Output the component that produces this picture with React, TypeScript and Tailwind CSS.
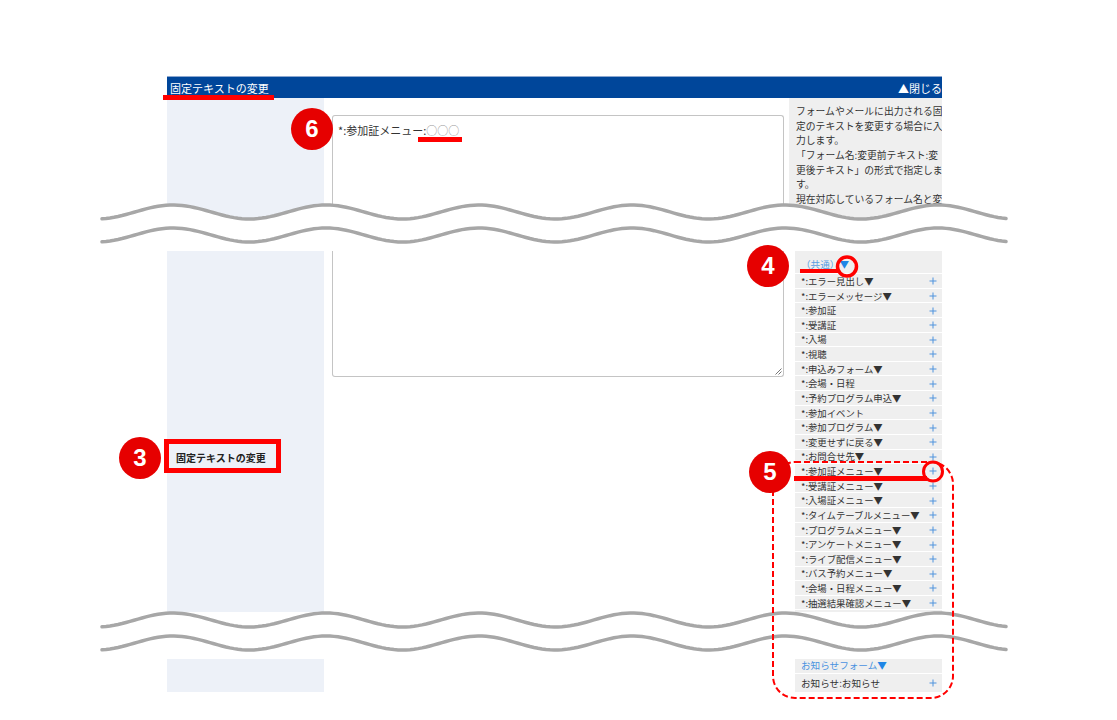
import React from 'react';

const commonItems = [
  '*:エラー見出し▼',
  '*:エラーメッセージ▼',
  '*:参加証',
  '*:受講証',
  '*:入場',
  '*:視聴',
  '*:申込みフォーム▼',
  '*:会場・日程',
  '*:予約プログラム申込▼',
  '*:参加イベント',
  '*:参加プログラム▼',
  '*:変更せずに戻る▼',
  '*:お問合せ先▼',
  '*:参加証メニュー▼',
  '*:受講証メニュー▼',
  '*:入場証メニュー▼',
  '*:タイムテーブルメニュー▼',
  '*:プログラムメニュー▼',
  '*:アンケートメニュー▼',
  '*:ライブ配信メニュー▼',
  '*:バス予約メニュー▼',
  '*:会場・日程メニュー▼',
  '*:抽選結果確認メニュー▼',
];

const helpLines = [
  'フォームやメールに出力される固',
  '定のテキストを変更する場合に入',
  '力します。',
  '「フォーム名:変更前テキスト:変',
  '更後テキスト」の形式で指定しま',
  'す。',
  '現在対応しているフォーム名と変',
];

function PlusIcon() {
  return (
    <svg width="8" height="8" viewBox="0 0 8 8" className="shrink-0">
      <path d="M4 0.5V7.5M0.5 4H7.5" stroke="#4f93dd" strokeWidth="1" />
    </svg>
  );
}

function Row({ label }: { label: string }) {
  return (
    <div className="flex h-[14.64px] items-center justify-between border-b border-white pl-[6px] pr-[5px] pt-[1px]">
      <span className="whitespace-nowrap text-[9.4px] text-[#333]">{label}</span>
      <PlusIcon />
    </div>
  );
}

function Wave({ className }: { className: string }) {
  const W = 910;
  const line = (c: number) => {
    let d = '';
    for (let x = 2; x <= W - 2; x += 4) {
      const y = c - 7 * Math.cos((2 * Math.PI * (x - 73)) / 153);
      d += (x === 2 ? 'M' : 'L') + x + ' ' + y.toFixed(2) + ' ';
    }
    return d;
  };
  const l1 = line(14);
  const l2 = line(37);
  return (
    <svg width={W} height={53} viewBox={`0 0 ${W} 53`} className={className}>
      <path d={`${l1} L${W} 14 L${W} 53 L0 53 L0 14 Z`} fill="#fff" />
      <path d={l1} fill="none" stroke="#a7a7a7" strokeWidth="3.5" strokeLinecap="round" />
      <path d={l2} fill="none" stroke="#a7a7a7" strokeWidth="3.5" strokeLinecap="round" />
    </svg>
  );
}

function Badge({ n, className }: { n: string; className: string }) {
  return (
    <div
      className={`absolute z-30 flex h-[42px] w-[42px] items-center justify-center rounded-full bg-[#e60000] font-['Liberation_Sans',Arial,sans-serif] text-[24px] font-bold text-white ${className}`}
    >
      {n}
    </div>
  );
}

export default function App() {
  return (
    <div className="relative h-[720px] w-[1117px] overflow-hidden bg-white font-['Noto_Sans_CJK_JP','Noto_Sans',sans-serif] text-[9.8px] leading-[14.67px]">
      <div className="flex flex-col pt-[76px]">
        {/* header bar */}
        <div className="ml-[167px] flex h-[22px] w-[775px] items-center justify-between border-t border-[#8da8d0] bg-[#00469a] pl-[3px] text-[11px] leading-[16px] text-white">
          <span>固定テキストの変更</span>
          <span>▲閉じる</span>
        </div>

        {/* top section */}
        <div className="ml-[167px] flex h-[124px] w-[775px] overflow-hidden">
          <div className="w-[157px] shrink-0 bg-[#edf1f8]" />
          <div className="w-[465px] shrink-0 pl-[8px] pr-[5px] pt-[17px]">
            <div className="h-full w-[452px] rounded-t-[3px] border border-b-0 border-[#c4c4c4] pl-[5px] pt-[6px] text-[11px] leading-[16px] text-[#333]">
              *:参加証メニュー:<span className="text-[#999]">○○○</span>
            </div>
          </div>
          <div className="w-[153px] shrink-0 bg-[#efefef] pl-[7px] pt-[6px] text-[#333]">
            {helpLines.map((l) => (
              <div key={l} className="whitespace-nowrap">
                {l}
              </div>
            ))}
          </div>
        </div>

        <Wave className="relative z-10 -mt-[24px] ml-[100px] shrink-0" />

        {/* middle section */}
        <div className="ml-[167px] flex h-[361px] w-[775px]">
          <div className="w-[157px] shrink-0 bg-[#edf1f8] pl-[9px] pt-[200px]">
            <div className="text-[10px] font-bold leading-[14px] text-[#222]">固定テキストの変更</div>
          </div>
          <div className="w-[465px] shrink-0 pl-[8px]">
            <div className="relative h-[126px] w-[452px] rounded-b-[3px] border border-t-0 border-[#c4c4c4]">
              <svg width="7" height="7" viewBox="0 0 7 7" className="absolute bottom-[1px] right-[1px]">
                <path d="M6.5 0.5L0.5 6.5M6.5 3.5L3.5 6.5" stroke="#777" strokeWidth="1" />
              </svg>
            </div>
          </div>
          <div className="ml-[6px] w-[147px] shrink-0 bg-[#efefef]">
            <div className="h-[23px] border-b border-white pl-[6px] pt-[6px] text-[9.6px] text-[#5b9ee2]">
              （共通）<span className="text-[#1f86e6]">▼</span>
            </div>
            {commonItems.map((it) => (
              <Row key={it} label={it} />
            ))}
          </div>
        </div>

        <Wave className="relative z-10 -mt-[6px] ml-[100px] shrink-0" />

        {/* bottom section */}
        <div className="-mt-[1px] ml-[167px] flex h-[34px] w-[775px]">
          <div className="w-[157px] shrink-0 bg-[#edf1f8]" />
          <div className="w-[465px] shrink-0" />
          <div className="ml-[6px] w-[147px] shrink-0 bg-[#efefef]">
            <div className="h-[16px] border-b border-white pl-[6px] text-[9.6px] text-[#4a92e0]">
              お知らせフォーム<span className="text-[#1f86e6]">▼</span>
            </div>
            <div className="flex h-[18px] items-center justify-between pl-[6px] pr-[5px]">
              <span className="text-[9.6px] text-[#333]">お知らせ:お知らせ</span>
              <PlusIcon />
            </div>
          </div>
        </div>
      </div>

      {/* annotations */}
      <svg width="1117" height="720" className="pointer-events-none absolute left-0 top-0 z-20">
        <rect x="773" y="462" width="180" height="236" rx="22" fill="none" stroke="#f00" strokeWidth="2" strokeDasharray="6 3" />
        <circle cx="847" cy="266.5" r="9.5" fill="none" stroke="#f00" strokeWidth="3.5" />
        <circle cx="933" cy="471.5" r="9.5" fill="none" stroke="#f00" strokeWidth="3" />
      </svg>
      <div className="absolute left-[163px] top-[95px] z-20 h-[5px] w-[111px] bg-[#f00]" />
      <div className="absolute left-[418px] top-[137px] z-20 h-[5px] w-[44px] bg-[#f00]" />
      <div className="absolute left-[800px] top-[269px] z-20 h-[4px] w-[38px] bg-[#f00]" />
      <div className="absolute left-[794px] top-[476px] z-20 h-[5px] w-[133px] bg-[#f00]" />
      <div className="absolute left-[164px] top-[439px] z-20 h-[34px] w-[117px] border-[5px] border-[#f00]" />

      <Badge n="6" className="left-[291px] top-[108px]" />
      <Badge n="4" className="left-[747px] top-[245px]" />
      <Badge n="3" className="left-[119px] top-[437px]" />
      <Badge n="5" className="left-[749px] top-[451px]" />
    </div>
  );
}
